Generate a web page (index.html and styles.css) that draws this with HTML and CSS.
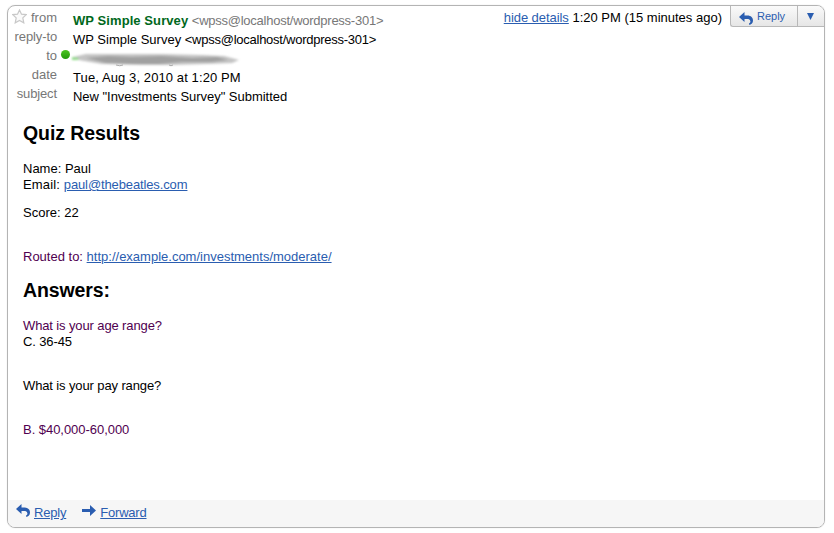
FILE: index.html
```html
<!DOCTYPE html>
<html lang="en">
<head>
<meta charset="utf-8">
<title>New "Investments Survey" Submitted</title>
<link rel="stylesheet" href="styles.css">
</head>
<body>
<article class="message">
  <header class="header">
    <dl class="details">
      <dt><svg class="star" viewBox="0 0 15 15"><path d="M7.5 1 L9.5 5.2 L14.2 5.6 L10.8 8.9 L11.8 13.8 L7.5 11.4 L3.2 13.8 L4.2 8.9 L0.8 5.6 L5.5 5.2 Z"/></svg>from</dt>
      <dd><b class="sender">WP Simple Survey</b> <span class="address muted">&lt;wpss@localhost/wordpress-301&gt;</span></dd>
      <dt class="snug">reply-to</dt>
      <dd>WP Simple Survey <span class="address">&lt;wpss@localhost/wordpress-301&gt;</span></dd>
      <dt>to</dt>
      <dd class="recipient">
        <span class="presence"></span>
        <svg class="smudge" viewBox="0 0 170 20">
          <defs><filter id="soft" x="-10%" y="-50%" width="120%" height="200%"><feGaussianBlur stdDeviation="1.2"/></filter></defs>
          <g filter="url(#soft)">
            <path fill="#c4c4c4" d="M1 5 L14 2 L40 2 L90 2 L130 3 L152 4 L167 8 L160 11 L135 12 L100 13 L70 13 L30 12 L12 9 L2 7 Z"/>
            <path fill="#a0a0a0" d="M14 6 L36 4 L60 5 L90 4 L120 6 L145 5 L156 8 L140 10 L110 10 L86 12 L60 12 L34 11 Z"/>
            <path fill="#90dc88" d="M0 5 L7 6 L6 8 L0 8 Z"/>
          </g>
          <path fill="none" stroke="#999" stroke-width=".8" d="M44 13 q4 1.5 7 0 M97 13 q2 1.5 4 0"/>
        </svg>
      </dd>
      <dt>date</dt>
      <dd class="wide">Tue, Aug 3, 2010 at 1:20 PM</dd>
      <dt class="snug">subject</dt>
      <dd class="subject">New "Investments Survey" Submitted</dd>
    </dl>
    <div class="time"><a class="toggle" href="#">hide details</a> 1:20 PM (15 minutes ago)</div>
    <div class="actions">
      <button class="reply"><svg class="arrow" viewBox="0 0 14 13"><path d="M0 5 L5.5 0 V3.5 H8.5 C12 3.5 14 5.8 14 8.5 C14 11 12.5 12.6 10 12.8 V11.6 C11.2 11 11.6 10 11.3 9 C11 7.6 9.8 7 8 7 H5.5 V10 Z"/></svg>Reply</button>
      <button class="more" aria-label="More"><svg class="caret" viewBox="0 0 7 7"><path d="M0 0 H7 L3.5 7 Z"/></svg></button>
    </div>
  </header>
  <section class="body">
    <h2>Quiz Results</h2>
    <p>Name: Paul<br><span class="label">Email: </span><a class="snug" href="#">paul@thebeatles.com</a></p>
    <p class="score">Score: 22</p>
    <p class="quoted routed">Routed to: <a href="#">http://example.com/investments/moderate/</a></p>
    <h2>Answers:</h2>
    <p class="answer snug"><span class="quoted">What is your age range?</span><br>C. 36-45</p>
    <p class="question snug">What is your pay range?</p>
    <p class="quoted choice">B. $40,000-60,000</p>
  </section>
  <footer class="footer">
    <svg class="arrow" viewBox="0 0 14 13"><path d="M0 5 L5.5 0 V3.5 H8.5 C12 3.5 14 5.8 14 8.5 C14 11 12.5 12.6 10 12.8 V11.6 C11.2 11 11.6 10 11.3 9 C11 7.6 9.8 7 8 7 H5.5 V10 Z"/></svg><a href="#">Reply</a>
    <svg class="forward" viewBox="0 0 14 11"><path d="M0 4 H8 V0 L14 5.5 L8 11 V7 H0 Z"/></svg><a href="#">Forward</a>
  </footer>
</article>
</body>
</html>
```
FILE: styles.css
```css
* { box-sizing: border-box; }
body {
  margin: 0;
  padding: 5px 9px 5px 7px;
  background: #fff;
  color: #000;
  font: 13px/16px "Liberation Sans", Arial, sans-serif;
}
a { color: #2a5db0; }
svg { display: block; fill: #2a5db0; flex: none; }
.snug { letter-spacing: -0.12px; }
.wide { letter-spacing: 0.1px; }
.message {
  display: flex;
  flex-direction: column;
  height: 523px;
  border: 1px solid #b4b4b4;
  border-radius: 8px;
  overflow: hidden;
  box-shadow: 0 0 1px #ccc;
}
.header { display: flex; align-items: flex-start; height: 100px; }
.details {
  display: grid;
  grid-template-columns: 49px 1fr;
  grid-auto-rows: 19px;
  column-gap: 16px;
  flex: 1;
  margin: 0;
}
.details dt {
  display: flex;
  justify-content: flex-end;
  padding-top: 4px;
  color: #777;
}
.details dd { margin: 0; padding-top: 7px; white-space: nowrap; }
.star { width: 15px; height: 15px; margin: -1px auto 0 4px; fill: #fafafa; stroke: #c8c8c8; stroke-width: 1.2; }
.sender { color: #00681c; letter-spacing: 0.08px; }
.address { letter-spacing: -0.25px; }
.muted { color: #777; }
.subject { letter-spacing: -0.03px; }
.details .recipient { display: flex; padding-top: 0; margin-left: -12px; }
.presence {
  width: 9px;
  height: 9px;
  margin-top: 6px;
  border-radius: 50%;
  background: linear-gradient(#4cc421, #239a0c);
}
.smudge { width: 170px; height: 20px; margin: 8px 0 0 2px; overflow: visible; }
.time { padding-top: 4px; margin-right: 8px; white-space: nowrap; }
.toggle { letter-spacing: -0.06px; }
.actions {
  display: flex;
  height: 21px;
  border: solid #b8b8b8;
  border-width: 0 0 1px 1px;
  border-bottom-left-radius: 3px;
  background: linear-gradient(#fafafa, #e6e6e6);
}
.actions button {
  display: flex;
  border: 0;
  padding: 0;
  background: none;
  color: #2a5db0;
  font: 11px/20px "Liberation Sans", Arial, sans-serif;
}
.actions .reply { width: 66px; }
.reply .arrow { margin: 6px 4px 0 8px; }
.actions .more { width: 27px; border-left: 1px solid #b8b8b8; justify-content: center; padding-right: 2px; }
.arrow { width: 14px; height: 13px; }
.caret { width: 7px; height: 7px; margin-top: 7px; }
.body { flex: 1; padding: 15px 15px 0; }
h2 { margin: 0 0 16px; font-size: 19.5px; line-height: 24px; letter-spacing: -0.1px; }
p { margin: 0 0 12px; }
.quoted { color: #500050; }
.label { letter-spacing: 0.15px; }
.score { margin-bottom: 28px; }
.routed { margin-bottom: 13px; }
.answer, .question { margin-bottom: 28px; }
.choice { letter-spacing: -0.04px; }
.footer {
  display: flex;
  height: 27px;
  padding: 5px 8px;
  background: #f6f6f6;
}
.footer .arrow { margin: -1px 4px 0 0; }
.footer a { letter-spacing: -0.2px; }
.footer .forward { width: 14px; height: 11px; margin: 0 4px 0 16px; }
```
